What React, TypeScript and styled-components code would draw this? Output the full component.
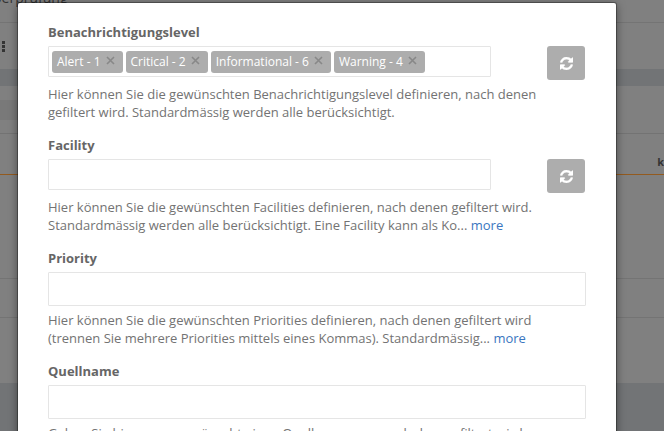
import React from 'react';
import styled, { createGlobalStyle } from 'styled-components';

const GlobalStyle = createGlobalStyle`
  * { box-sizing: border-box; }
  body {
    margin: 0;
    overflow: hidden;
    background: #808080;
    color: #666666;
    font: 13px/18px "Open Sans", sans-serif;
  }
  button, input { font: inherit; }
`;

const Screen = styled.div`
  position: relative;
  height: 100vh;
  overflow: hidden;
`;

const Backdrop = styled.div`
  display: flex;
  flex-direction: column;
  color: #343434;
`;

const Strip = styled.div<{ $height: number; $tone?: string; $line?: string }>`
  display: flex;
  justify-content: space-between;
  flex: none;
  height: ${(p) => p.$height}px;
  background: ${(p) => p.$tone ?? '#808080'};
  border-bottom: ${(p) => (p.$line ? `1px solid ${p.$line}` : 'none')};
`;

const PageTitle = styled.div`
  margin: -11px 0 0 -7px;
  font-size: 14px;
`;

const MenuDots = styled.svg`
  width: 5px;
  height: 11px;
  margin: 18px 0 0 1px;
  fill: #343434;
`;

const ColumnTitle = styled.strong`
  margin: 19px 0 0 auto;
  font-size: 11px;
`;

const HalfStrip = styled.div`
  width: 50%;
  background: #797979;
`;

const Modal = styled.section`
  position: absolute;
  top: 3px;
  left: 18px;
  right: 48px;
  padding: 20px 30px;
  border-radius: 2px;
  background: #ffffff;
  box-shadow: 0 0 0 1px rgba(0, 0, 0, 0.3), 0 2px 10px rgba(0, 0, 0, 0.5);
`;

const Group = styled.div`
  display: flex;
  flex-direction: column;
  margin-bottom: 15px;
`;

const Label = styled.label`
  margin-bottom: 5px;
  font-weight: 700;
`;

const Control = styled.div<{ $withButton?: boolean }>`
  display: flex;
  align-items: flex-start;
  gap: 56px;
  height: 34px;
  margin-bottom: 5px;
  padding-right: ${(p) => (p.$withButton ? 1 : 0)}px;
`;

const fieldBox = `
  border: 1px solid #e5e5e5;
  border-radius: 1px;
  background: #ffffff;
  color: #666666;
  outline: none;
`;

const TextField = styled.input<{ $compact?: boolean }>`
  ${fieldBox}
  flex: 1;
  min-width: 0;
  height: ${(p) => (p.$compact ? 31 : 34)}px;
  padding: 6px 12px;
`;

const TagBox = styled.div`
  ${fieldBox}
  display: flex;
  flex: 1;
  align-items: center;
  gap: 3px;
  height: 31px;
  padding: 0 3px;
`;

const Tag = styled.span`
  display: flex;
  flex: none;
  align-items: center;
  height: 22px;
  padding: 0 8px 0 5px;
  border-radius: 3px;
  background: #adadad;
  color: #ffffff;
  font-size: 12px;
`;

const TagRemove = styled.button`
  display: flex;
  margin: 0 0 2px 5px;
  padding: 0;
  border: 0;
  background: none;
  color: #888888;
  cursor: pointer;
`;

const TagInput = styled.input`
  flex: 1;
  width: 0;
  min-width: 0;
  padding: 0;
  border: 0;
  outline: none;
`;

const RefreshButton = styled.button`
  display: flex;
  flex: none;
  align-items: center;
  justify-content: center;
  width: 38px;
  height: 34px;
  padding: 0;
  border: 0;
  border-radius: 3px;
  background: #adadad;
  color: #ffffff;
  cursor: pointer;
`;

const Help = styled.p`
  max-width: 500px;
  margin: 0;
  color: #737373;
`;

const MoreLink = styled.a`
  color: #3a76c0;
  text-decoration: none;
`;

const CloseIcon = () => (
  <svg width="9" height="9" viewBox="0 0 9 9" aria-hidden="true">
    <path d="M1 1l7 7M8 1L1 8" stroke="currentColor" strokeWidth="1.6" fill="none" />
  </svg>
);

const RefreshIcon = () => (
  <svg width="13" height="13" viewBox="0 0 1536 1536" aria-hidden="true">
    <path
      fill="currentColor"
      stroke="currentColor"
      strokeWidth="40"
      d="M1511 928q0 5-1 7-64 268-268 434.500T764 1536q-146 0-282.500-55T238 1324l-129 129q-19 19-45 19t-45-19-19-45V960q0-26 19-45t45-19h448q26 0 45 19t19 45-19 45l-137 137q71 66 161 102t187 36q134 0 250-65t186-179q11-17 53-117 8-23 30-23h192q13 0 22.500 9.500t9.500 22.500zm25-800v448q0 26-19 45t-45 19h-448q-26 0-45-19t-19-45 19-45l138-138Q969 256 768 256q-134 0-250 65T332 500q-11 17-53 117-8 23-30 23H50q-13 0-22.500-9.500T18 608v-7q65-268 270-434.500T768 0q146 0 284 55.500T1297 212l130-129q19-19 45-19t45 19 19 45z"
    />
  </svg>
);

const Refresh = ({ name }: { name: string }) => (
  <RefreshButton type="button" aria-label={`${name} neu laden`}>
    <RefreshIcon />
  </RefreshButton>
);

const tags = ['Alert - 1', 'Critical - 2', 'Informational - 6', 'Warning - 4'];

export default function App() {
  return (
    <Screen>
      <GlobalStyle />
      <Backdrop>
        <Strip $height={23} $line="#747474">
          <PageTitle>berprüfung</PageTitle>
        </Strip>
        <Strip $height={46}>
          <MenuDots viewBox="0 0 5 11" aria-hidden="true">
            <path d="M1 0h3v3H1zM1 4h3v3H1zM1 8h3v3H1z" />
          </MenuDots>
        </Strip>
        <Strip $height={17} $tone="#727476" />
        <Strip $height={14} />
        <Strip $height={20}>
          <HalfStrip />
        </Strip>
        <Strip $height={14} $line="#737373" />
        <Strip $height={41} $line="#935a1e">
          <ColumnTitle>k</ColumnTitle>
        </Strip>
        <Strip $height={104} $line="#747474" />
        <Strip $height={39} $line="#747474" />
        <Strip $height={65} />
        <Strip $height={48} $tone="#727476" />
      </Backdrop>
      <Modal role="dialog" aria-label="Filter">
        <Group>
          <Label htmlFor="level">Benachrichtigungslevel</Label>
          <Control $withButton>
            <TagBox>
              {tags.map((tag) => (
                <Tag key={tag}>
                  {tag}
                  <TagRemove type="button" aria-label={`${tag} entfernen`}>
                    <CloseIcon />
                  </TagRemove>
                </Tag>
              ))}
              <TagInput id="level" />
            </TagBox>
            <Refresh name="Benachrichtigungslevel" />
          </Control>
          <Help>
            Hier können Sie die gewünschten Benachrichtigungslevel definieren, nach denen
            gefiltert wird. Standardmässig werden alle berücksichtigt.
          </Help>
        </Group>
        <Group>
          <Label htmlFor="facility">Facility</Label>
          <Control $withButton>
            <TextField id="facility" $compact />
            <Refresh name="Facility" />
          </Control>
          <Help>
            Hier können Sie die gewünschten Facilities definieren, nach denen gefiltert wird.
            Standardmässig werden alle berücksichtigt. Eine Facility kann als Ko...{' '}
            <MoreLink href="#facility">more</MoreLink>
          </Help>
        </Group>
        <Group>
          <Label htmlFor="priority">Priority</Label>
          <Control>
            <TextField id="priority" />
          </Control>
          <Help>
            Hier können Sie die gewünschten Priorities definieren, nach denen gefiltert wird
            (trennen Sie mehrere Priorities mittels eines Kommas). Standardmässig...{' '}
            <MoreLink href="#priority">more</MoreLink>
          </Help>
        </Group>
        <Group>
          <Label htmlFor="source">Quellname</Label>
          <Control>
            <TextField id="source" />
          </Control>
          <Help>Geben Sie hier wenn gewünscht einen Quellnamen an, nach dem gefiltert wird.</Help>
        </Group>
      </Modal>
    </Screen>
  );
}
